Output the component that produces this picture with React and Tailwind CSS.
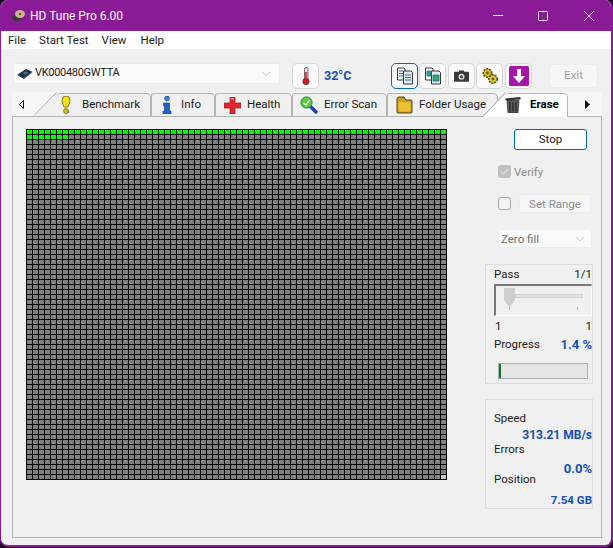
import { ChevronDown } from "lucide-react";

const FONT = "font-['Roboto','Liberation_Sans',sans-serif]";

function DriveIcon({ className }) {
  return (
    <svg viewBox="0 0 18 12" className={className}>
      <path d="M1 7 L10 1 L17 4 L8 11 Z" fill="#1c2b3f" />
      <path d="M1 7 L8 11 L8 12 L1 8 Z" fill="#0b1420" />
      <path d="M8 11 L17 4 L17 5 L8 12 Z" fill="#34506e" />
      <path d="M6 6 L10 3.5 L13 5 L9 7.5 Z" fill="#456a8f" />
    </svg>
  );
}

function BulbIcon() {
  return (
    <svg viewBox="0 0 10 18" className="w-[10px] h-[18px] shrink-0">
      <path d="M1 4 Q1 0 5 0 Q9 0 9 4 Q9 7 7 11 L3 11 Q1 7 1 4 Z" fill="#f2e21c" stroke="#6b6410" strokeWidth="0.8" />
      <circle cx="5" cy="15" r="2.4" fill="#d9c914" stroke="#6b6410" strokeWidth="0.8" />
      <circle cx="7.5" cy="16" r="1" fill="#d24fd0" />
    </svg>
  );
}

function InfoIcon() {
  return (
    <svg viewBox="0 0 10 18" className="w-[10px] h-[18px] shrink-0">
      <circle cx="5" cy="2.5" r="2.4" fill="#2f7fe0" stroke="#123a7a" strokeWidth="0.6" />
      <path d="M1.5 7 L7.5 7 L7.5 15 L9 15 L9 18 L1 18 L1 15 L2.5 15 L2.5 10 L1.5 10 Z" fill="#1d63cf" stroke="#123a7a" strokeWidth="0.6" />
    </svg>
  );
}

function CrossIcon() {
  return (
    <svg viewBox="0 0 17 17" className="w-[17px] h-[17px] shrink-0">
      <path d="M6 0 H11 V6 H17 V11 H11 V17 H6 V11 H0 V6 H6 Z" fill="#e2262c" stroke="#8c1a1c" strokeWidth="0.7" />
      <path d="M6.5 1 H10 V2.5 H6.5 Z" fill="#f59a9a" />
    </svg>
  );
}

function ScanIcon() {
  return (
    <svg viewBox="0 0 18 18" className="w-[18px] h-[18px] shrink-0">
      <path d="M10 10 L16 16" stroke="#1f3fa8" strokeWidth="3.4" strokeLinecap="round" />
      <circle cx="6.5" cy="6.5" r="5.6" fill="#55cc3a" stroke="#5a6a60" strokeWidth="1" />
      <path d="M3.5 7 L6 9 L9.5 4" stroke="#eaffea" strokeWidth="1.4" fill="none" />
    </svg>
  );
}

function FolderIcon() {
  return (
    <svg viewBox="0 0 17 18" className="w-[17px] h-[18px] shrink-0">
      <path d="M1 16 V3 Q1 1 3 1 H8 L10 4 H15 Q16 4 16 5 V16 Q16 17 15 17 H2 Q1 17 1 16 Z" fill="#c99f1a" stroke="#3f361a" strokeWidth="0.9" />
      <path d="M2.5 6 H14.5 V15.5 H2.5 Z" fill="#e8c232" />
    </svg>
  );
}

function TrashIcon() {
  return (
    <svg viewBox="0 0 16 17" className="mb-[2px] ml-[-1px] w-[16px] h-[17px] shrink-0">
      <path d="M0.5 2.5 L15.5 1 V3.5 L0.5 4.5 Z" fill="#2f2f2f" />
      <path d="M2 4.5 H14 L13 17 H3 Z" fill="#5f5f5f" stroke="#222" strokeWidth="0.7" />
      <path d="M5 6 V15.5 M8 6 V15.5 M11 6 V15.5" stroke="#1f1f1f" strokeWidth="1.2" />
    </svg>
  );
}

function Slant({ active }) {
  return (
    <svg
      viewBox="0 0 23 24"
      preserveAspectRatio="none"
      className={`w-[23px] shrink-0 ${active ? "h-[25px]" : "h-6"}`}
    >
      <path d="M0 24 L21 2 Q22.5 0.5 23 0.5 V24 Z" fill={active ? "#ffffff" : "#f0f0f0"} />
      <path d="M0 23.5 L21 2 Q22 1 23 0.5" fill="none" stroke="#b4b4b4" />
    </svg>
  );
}

function Tab({ icon, label, width, gap, pad, slant, active, className = "" }) {
  return (
    <div className={`flex h-[25px] shrink-0 items-start ${className}`}>
      {slant && <Slant active={active} />}
      <div
        className={`mt-px flex items-center rounded-tr-[5px] rounded-tl-[3px] border-t border-r border-[#b4b4b4] ${slant ? "border-l-0" : "border-l"} ${active ? "h-6 bg-white font-bold text-black" : "h-[23px] bg-[#f0f0f0] text-[#1a1a1a]"} ${width} ${gap} ${pad}`}
      >
        {icon}
        <span>{label}</span>
      </div>
    </div>
  );
}

function DocsIcon({ color }) {
  return (
    <svg viewBox="0 0 16 18" className="w-4 h-[18px]">
      <path d="M0.5 1 H7 L8 2 V13 H0.5 Z" fill="#ffffff" stroke="#222" strokeWidth="0.9" />
      <path d="M6.5 4 H14 L15.5 5.5 V17 H6.5 Z" fill="#e8e8e8" stroke="#222" strokeWidth="0.9" />
      {color === "blue" ? (
        <path d="M2 4 H6 M2 6.5 H6 M2 9 H6 M8 8 H14 M8 10.5 H14 M8 13 H14" stroke="#1c6bd8" strokeWidth="1.2" />
      ) : (
        <path d="M2 4 H6 V9 H2 Z M8 8 H14 V14 H8 Z" fill="#27b14a" stroke="#1c6bd8" strokeWidth="0.8" />
      )}
    </svg>
  );
}

function CameraIcon() {
  return (
    <svg viewBox="0 0 18 14" className="w-[15px] h-3">
      <path d="M6 2 V0.5 H12 V2 H17 Q18 2 18 3 V13 Q18 14 17 14 H1 Q0 14 0 13 V3 Q0 2 1 2 Z" fill="#3a3a3a" />
      <circle cx="9" cy="8" r="3.6" fill="#e2e2e2" />
      <circle cx="9" cy="8" r="2" fill="#4c4c4c" />
    </svg>
  );
}

function GearsIcon() {
  return (
    <svg viewBox="0 0 18 18" className="w-[18px] h-[18px]">
      <circle cx="6.5" cy="6" r="4.2" fill="#d8c21c" stroke="#4f4a10" strokeWidth="1.6" strokeDasharray="2 1" />
      <circle cx="12" cy="12" r="4.2" fill="#e0cb25" stroke="#4f4a10" strokeWidth="1.6" strokeDasharray="2 1" />
      <circle cx="6.5" cy="6" r="1.4" fill="#5c5514" />
      <circle cx="12" cy="12" r="1.4" fill="#5c5514" />
    </svg>
  );
}

function ToolButton({ selected, children }) {
  return (
    <div
      className={`flex h-[26px] w-[27px] items-center justify-center rounded-[5px] border bg-[#fafafa] ${selected ? "border-[#0067c0]" : "border-[#d6d6d6]"}`}
    >
      {children}
    </div>
  );
}

function BlockMap() {
  const cells = Array.from({ length: 4900 }, (_, i) => i);
  return (
    <div className="grid shrink-0 self-start grid-cols-[repeat(70,5px)] auto-rows-[4px] gap-px bg-black p-px">
      {cells.map((i) => (
        <div
          key={i}
          className={i < 77 ? "bg-[#00ff00]" : i === 4899 ? "bg-[#c8c8c8]" : "bg-[#808080]"}
        />
      ))}
    </div>
  );
}

function Value({ children, className = "" }) {
  return (
    <div className={`text-right font-bold leading-4 text-[#1450b4] ${className}`}>
      {children}
    </div>
  );
}

export default function App() {
  return (
    <div className={`${FONT} h-[548px] w-[613px] overflow-hidden bg-[#101020] text-[11.5px] text-[#1a1a1a]`}>
      <div className="flex h-[547px] w-[613px] flex-col overflow-hidden rounded-[8px] border-r-2 border-b-2 border-l border-[#8a1a96] bg-[#f0f0f0]">
        {/* title bar */}
        <div className="flex h-[31px] shrink-0 items-center bg-[#8a1a96] text-white">
          <svg viewBox="0 0 16 14" className="ml-[9px] h-[14px] w-4">
            <path d="M1 9 L9 2 L15 6 L7 13 Z" fill="#3a3a3a" />
            <ellipse cx="10" cy="5" rx="5" ry="4" fill="#c9b78a" />
            <circle cx="10" cy="5" r="1.2" fill="#6d5f3d" />
          </svg>
          <span className="ml-[4px] text-xs">HD Tune Pro 6.00</span>
          <svg viewBox="0 0 10 1" className="ml-auto h-px w-[10px]">
            <path d="M0 0.5 H10" stroke="#fff" />
          </svg>
          <svg viewBox="0 0 10 10" className="ml-[35px] h-[10px] w-[10px]">
            <rect x="0.5" y="0.5" width="9" height="9" rx="1" fill="none" stroke="#fff" />
          </svg>
          <svg viewBox="0 0 10 10" className="mr-[17px] ml-[36px] h-[10px] w-[10px]">
            <path d="M0 0 L10 10 M10 0 L0 10" stroke="#f0dff2" strokeWidth="0.9" />
          </svg>
        </div>

        {/* menu */}
        <div className="flex h-[18px] shrink-0 items-center gap-[13px] bg-white pt-0.5 pl-[7px]">
          <span>File</span>
          <span>Start Test</span>
          <span>View</span>
          <span className="ml-px">Help</span>
        </div>

        {/* toolbar */}
        <div className="mt-[14px] flex h-[26px] shrink-0 items-start pl-3">
          <div className="flex h-[21px] w-[267px] items-center rounded-[2px] border border-[#ececec] bg-[#fafafa] pr-1.5 pl-[2px]">
            <DriveIcon className="h-[11px] w-[18px]" />
            <span className="ml-px text-[11px] tracking-[-0.3px]">VK000480GWTTA</span>
            <ChevronDown size={14} strokeWidth={1} className="ml-auto text-[#9a9a9a]" />
          </div>
          <div className="ml-[12px]">
            <ToolButton>
              <svg viewBox="0 0 8 18" className="h-[18px] w-2">
                <rect x="2.5" y="0.5" width="3.4" height="13" rx="1.6" fill="#e8e8e8" stroke="#333" strokeWidth="0.7" />
                <circle cx="4" cy="14.5" r="3.2" fill="#d81e25" stroke="#333" strokeWidth="0.6" />
                <rect x="3.2" y="5" width="1.6" height="9" fill="#d81e25" />
              </svg>
            </ToolButton>
          </div>
          <span className="mt-1 ml-[5px] w-[67px] text-[12.5px] leading-[18px] font-bold text-[#1450b4]">32°C</span>
          <div className="flex gap-px">
            <ToolButton selected><DocsIcon color="blue" /></ToolButton>
            <ToolButton><DocsIcon color="green" /></ToolButton>
            <div className="ml-px"><ToolButton><CameraIcon /></ToolButton></div>
            <ToolButton><GearsIcon /></ToolButton>
            <div className="ml-px">
              <ToolButton>
                <svg viewBox="0 0 20 20" className="h-5 w-5">
                  <rect width="20" height="20" rx="1.5" fill="#a816a8" />
                  <path d="M8 3 H12 V10 H16 L10 17 L4 10 H8 Z" fill="#fff" />
                </svg>
              </ToolButton>
            </div>
          </div>
          <div className="mt-px ml-[17px] flex h-6 w-[49px] items-center justify-center rounded-[4px] border border-[#ececec] bg-[#f6f6f6] text-[#a0a0a0]">
            Exit
          </div>
        </div>

        {/* tab strip */}
        <div className="relative z-10 mt-[3px] mb-[-1px] ml-[11px] flex h-[25px] w-[590px] shrink-0 items-start bg-[linear-gradient(#f6f6f6_24px,transparent_24px)]">
          <div className="flex h-6 w-[22px] shrink-0 items-center pl-[7px]">
            <svg viewBox="0 0 5 9" className="h-[9px] w-[5px]">
              <path d="M4.5 0.5 V8.5 L0.5 4.5 Z" fill="#fff" stroke="#111" />
            </svg>
          </div>
          <Tab slant icon={<BulbIcon />} label="Benchmark" width="w-[94px]" gap="gap-[11px]" pad="pl-[4px]" />
          <Tab icon={<InfoIcon />} label="Info" width="w-[64px]" gap="gap-[9px]" pad="pl-[10px]" />
          <Tab icon={<CrossIcon />} label="Health" width="w-[77px]" gap="gap-[6px]" pad="pl-2" />
          <Tab icon={<ScanIcon />} label="Error Scan" width="w-[95px]" gap="gap-[6px]" pad="pl-[7px]" />
          <Tab icon={<FolderIcon />} label="Folder Usage" width="w-[111px]" gap="gap-[6px]" pad="pl-2" />
          <Tab slant active icon={<TrashIcon />} label="Erase" width="w-[62px]" gap="gap-[9px]" pad="pl-0 pb-px" className="z-10 ml-[-15px]" />
          <div className="flex h-6 items-center pl-[17px]">
            <svg viewBox="0 0 5 9" className="h-[9px] w-[5px]">
              <path d="M0 0 V9 L5 4.5 Z" fill="#111" />
            </svg>
          </div>
        </div>

        {/* panel */}
        <div className="ml-[11px] flex h-[422px] w-[590px] shrink-0 border border-[#b4b4b4] bg-[#f0f0f0] pt-3 pl-[13px]">
          <BlockMap />
          <div className="ml-[38px] flex w-[108px] shrink-0 flex-col">
            <div className="ml-[29px] flex h-[21px] w-[73px] items-center justify-center rounded-[3px] border border-[#0067c0] bg-white pt-px">
              Stop
            </div>

            <div className="mt-[15px] ml-[13px] flex h-[13px] items-center gap-[3px] text-[#8c8c8c]">
              <div className="flex h-[13px] w-[13px] items-center justify-center rounded-[3px] bg-[#c0c0c0]">
                <svg viewBox="0 0 9 7" className="h-[7px] w-[9px]">
                  <path d="M1 3.5 L3.5 6 L8 1" fill="none" stroke="#f0f0f0" />
                </svg>
              </div>
              <span className="pt-0.5">Verify</span>
            </div>

            <div className="mt-[16px] ml-[13px] flex h-[19px] items-center">
              <div className="h-[13px] w-[13px] rounded-[3px] border border-[#a8a8a8] bg-[#f4f4f4]" />
              <div className="ml-2 flex h-[19px] w-[72px] items-center justify-center rounded-[3px] border border-[#ececec] bg-[#f6f6f6] pt-0.5 text-[#8c8c8c]">
                Set Range
              </div>
            </div>

            <div className="mt-[16px] ml-[13px] flex h-[19px] w-[94px] items-center rounded-[2px] border border-[#ececec] bg-[#fafafa] pr-1 pl-[2px] text-[#707070]">
              <span className="pt-0.5">Zero fill</span>
              <ChevronDown size={14} strokeWidth={1} className="ml-auto text-[#9a9a9a]" />
            </div>

            <div className="mt-[16px] flex h-[120px] flex-col border border-[#dcdcdc] pl-2">
              <div className="mt-px flex h-[17px] items-center justify-between">
                <span>Pass</span>
                <span>1/1</span>
              </div>
              <div className="mt-px flex h-8 w-[98px] flex-col border-t-2 border-r border-b border-l-2 border-t-[#777] border-r-white border-b-white border-l-[#777] pl-[8px]">
                <div className="mt-0.5 flex h-[19px] items-start">
                  <svg viewBox="0 0 11 19" className="h-[19px] w-[11px]">
                    <path d="M0 0 H11 V12 L5.5 19 L0 12 Z" fill="#cdcdcd" />
                  </svg>
                  <div className="mt-[6px] h-1 w-[68px] border border-[#d0d0d0] bg-[#e4e4e4]" />
                </div>
                <div className="ml-[5px] flex h-[3px] w-[69px] justify-between">
                  <div className="h-[3px] w-px bg-[#b8b8b8]" />
                  <div className="h-[3px] w-px bg-[#b8b8b8]" />
                </div>
              </div>
              <div className="mt-[2px] flex h-[17px] items-center justify-between pl-px">
                <span>1</span>
                <span>1</span>
              </div>
              <div className="mt-px flex h-[17px] items-center justify-between">
                <span>Progress</span>
                <span className="text-[13px] font-bold text-[#1450b4]">1.4 %</span>
              </div>
              <div className="mt-2.5 ml-1 h-4 w-[90px] border border-[#b0b0b0] bg-[#e6e6e6]">
                <div className="h-full w-[2px] bg-[#0a7a20]" />
              </div>
            </div>

            <div className="mt-[15px] flex h-[110px] flex-col border border-[#dcdcdc] pl-2">
              <div className="mt-[10px] h-4 leading-4">Speed</div>
              <Value className="mt-px text-xs">313.21 MB/s</Value>
              <div className="mt-[-2px] h-4 leading-4">Errors</div>
              <Value className="mt-1 text-[13px]">0.0%</Value>
              <div className="mt-[-6px] h-4 leading-4">Position</div>
              <Value className="mt-[5px] text-[11.5px]">7.54 GB</Value>
            </div>
          </div>
        </div>
      </div>
    </div>
  );
}
